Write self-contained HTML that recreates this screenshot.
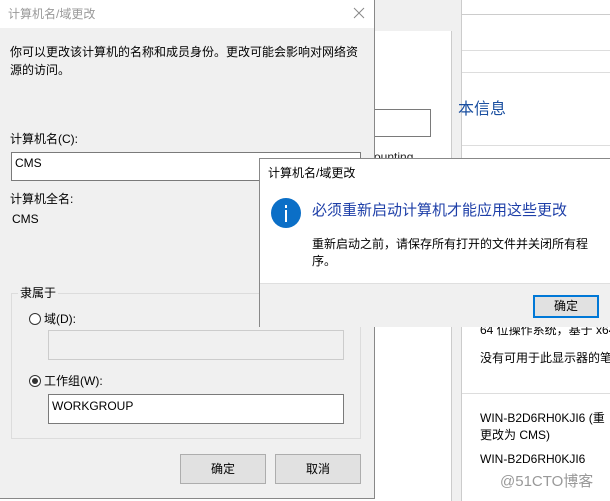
<!DOCTYPE html>
<html><head><meta charset="utf-8"><style>
body{margin:0;width:610px;height:501px;position:relative;overflow:hidden;background:#fff;font-family:"Liberation Sans","Noto Sans CJK SC",sans-serif;font-size:12px;color:#000}
.a{position:absolute}
.t{position:absolute;white-space:nowrap;line-height:16px}
.inp{position:absolute;background:#fff;border:1px solid #7a7a7a;box-sizing:border-box}
.btn{position:absolute;background:#e1e1e1;border:1px solid #adadad;box-sizing:border-box;text-align:center;line-height:28px}
</style></head><body>
<!-- background window -->
<div class="a" style="left:374px;top:0;width:90px;height:501px;background:#f0f0f0"></div>
<div class="a" style="left:374px;top:31px;width:77px;height:470px;background:#fff;border-right:1px solid #ccc"></div>
<div class="a" style="left:461px;top:0;width:149px;height:501px;background:#fff;border-left:1px solid #ccc"></div>
<div class="a" style="left:462px;top:14px;width:148px;height:1px;background:#ccc"></div>
<div class="a" style="left:462px;top:50px;width:148px;height:1px;background:#ddd"></div>
<div class="a" style="left:462px;top:72px;width:148px;height:1px;background:#ddd"></div>
<div class="a" style="left:462px;top:145px;width:148px;height:1px;background:#ddd"></div>
<div class="a" style="left:462px;top:393px;width:148px;height:1px;background:#ddd"></div>
<div class="a" style="left:370px;top:109px;width:61px;height:28px;border:1px solid #7a7a7a;box-sizing:border-box;background:#fff"></div>
<div class="t" style="left:374px;top:149px;color:#222">ounting</div>
<div class="t" style="left:458px;top:100px;font-size:16px;line-height:20px;color:#1a4fa0">本信息</div>
<div class="t" style="left:480px;top:322px">64 位操作系统，基于 x64</div>
<div class="t" style="left:480px;top:350px">没有可用于此显示器的笔</div>
<div class="t" style="left:480px;top:410px">WIN-B2D6RH0KJI6 (重</div>
<div class="t" style="left:480px;top:427px">更改为 CMS)</div>
<div class="t" style="left:480px;top:451px">WIN-B2D6RH0KJI6</div>
<div class="t" style="left:500px;top:472px;font-size:15px;line-height:20px;color:#999">@51CTO博客</div>

<!-- left dialog -->
<div class="a" style="left:0;top:0;width:374px;height:498px;background:#f0f0f0;border-right:1px solid #888;border-bottom:1px solid #888"></div>
<div class="a" style="left:0;top:0;width:374px;height:28px;background:#fff"></div>
<div class="t" style="left:8px;top:6px;color:#999">计算机名/域更改</div>
<svg class="a" style="left:353px;top:7px" width="12" height="12"><path d="M1 1L11 11M11 1L1 11" stroke="#888" stroke-width="1"/></svg>
<div class="t" style="left:10px;top:44px">你可以更改该计算机的名称和成员身份。更改可能会影响对网络资</div>
<div class="t" style="left:10px;top:62px">源的访问。</div>
<div class="t" style="left:10px;top:131px">计算机名(C):</div>
<div class="inp" style="left:11px;top:152px;width:350px;height:29px"></div>
<div class="t" style="left:15px;top:155px">CMS</div>
<div class="t" style="left:10px;top:191px">计算机全名:</div>
<div class="t" style="left:12px;top:211px">CMS</div>
<div class="a" style="left:11px;top:293px;width:350px;height:146px;border:1px solid #dcdcdc;box-sizing:border-box"></div>
<div class="t" style="left:18px;top:285px;background:#f0f0f0;padding:0 2px">隶属于</div>
<div class="a" style="left:29px;top:313px;width:12px;height:12px;border:1px solid #333;border-radius:50%;background:#fff;box-sizing:border-box"></div>
<div class="t" style="left:44px;top:311px">域(D):</div>
<div class="a" style="left:48px;top:330px;width:296px;height:30px;border:1px solid #ccc;background:#f0f0f0;box-sizing:border-box"></div>
<div class="a" style="left:29px;top:375px;width:12px;height:12px;border:1px solid #333;border-radius:50%;background:#fff;box-sizing:border-box"></div>
<div class="a" style="left:32px;top:378px;width:6px;height:6px;border-radius:50%;background:#333"></div>
<div class="t" style="left:44px;top:373px">工作组(W):</div>
<div class="inp" style="left:48px;top:394px;width:296px;height:30px"></div>
<div class="t" style="left:52px;top:398px">WORKGROUP</div>
<div class="btn" style="left:180px;top:454px;width:86px;height:30px">确定</div>
<div class="btn" style="left:275px;top:454px;width:86px;height:30px">取消</div>

<!-- message box -->
<div class="a" style="left:259px;top:158px;width:360px;height:169px;background:#fff;border:1px solid #888;box-sizing:border-box"></div>
<div class="a" style="left:260px;top:283px;width:350px;height:43px;background:#f0f0f0;border-top:1px solid #dfdfdf"></div>
<div class="t" style="left:268px;top:165px">计算机名/域更改</div>
<div class="a" style="left:271px;top:198px;width:30px;height:30px;border-radius:50%;background:#0b6fc7"></div>
<div class="a" style="left:285px;top:205px;width:2px;height:3px;background:#fff"></div>
<div class="a" style="left:285px;top:210px;width:2px;height:12px;background:#fff"></div>
<div class="t" style="left:312px;top:201px;font-size:15px;line-height:20px;color:#1e3fa8">必须重新启动计算机才能应用这些更改</div>
<div class="t" style="left:312px;top:236px">重新启动之前，请保存所有打开的文件并关闭所有程</div>
<div class="t" style="left:312px;top:253px">序。</div>
<div class="a" style="left:533px;top:295px;width:66px;height:23px;background:#e1e1e1;border:2px solid #0078d7;box-sizing:border-box;text-align:center;line-height:19px">确定</div>
</body></html>
